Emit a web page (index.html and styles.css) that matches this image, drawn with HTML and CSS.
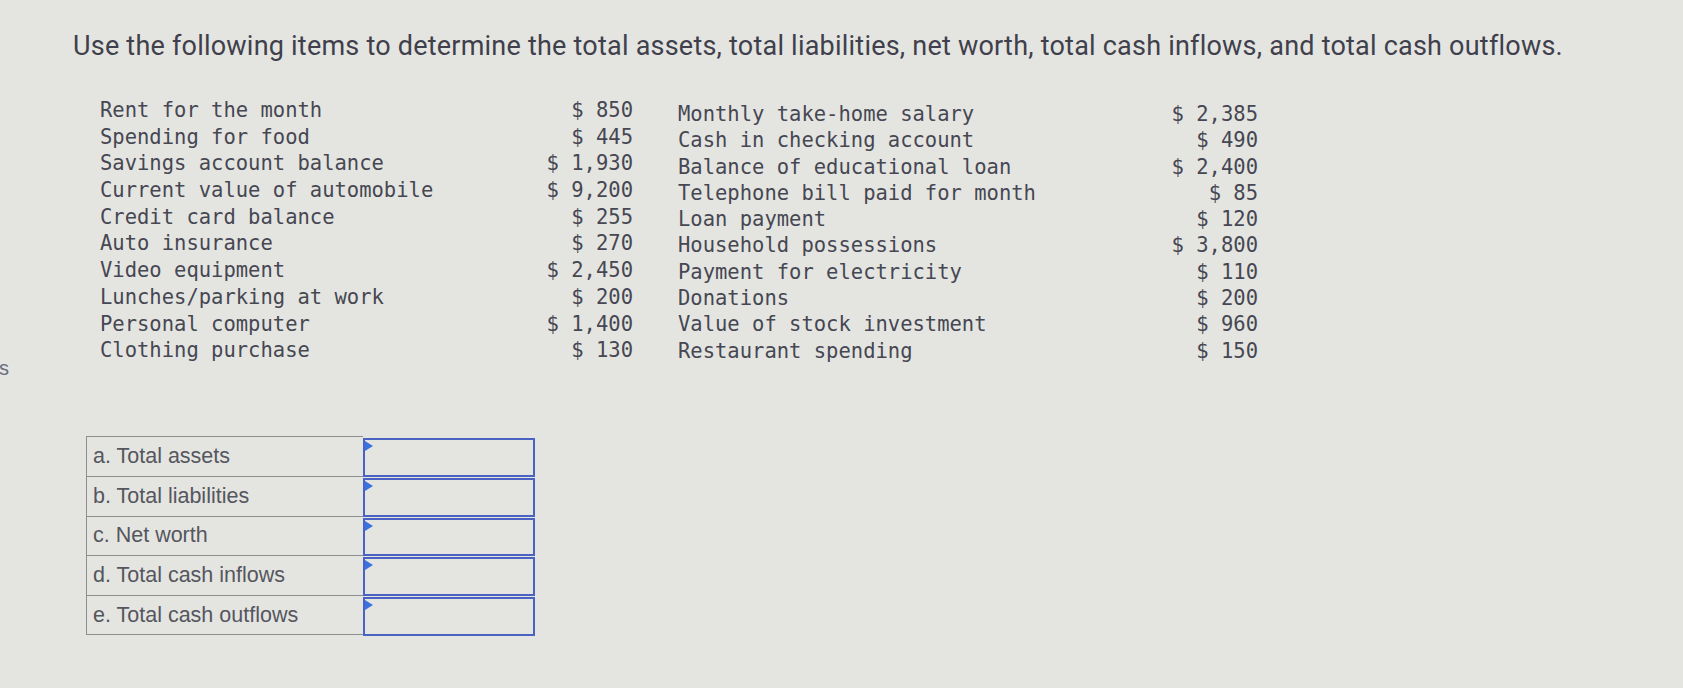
FILE: index.html
```html
<!DOCTYPE html>
<html>
<head>
<meta charset="utf-8">
<link rel="stylesheet" href="styles.css">
</head>
<body>
<div class="page">
  <h1 class="title">Use the following items to determine the total assets, total liabilities, net worth, total cash inflows, and total cash outflows.</h1>

  <div class="data">
    <div class="list list-left">
      <span class="lbl">Rent for the month</span><span class="val">$ 850</span>
      <span class="lbl">Spending for food</span><span class="val">$ 445</span>
      <span class="lbl">Savings account balance</span><span class="val">$ 1,930</span>
      <span class="lbl">Current value of automobile</span><span class="val">$ 9,200</span>
      <span class="lbl">Credit card balance</span><span class="val">$ 255</span>
      <span class="lbl">Auto insurance</span><span class="val">$ 270</span>
      <span class="lbl">Video equipment</span><span class="val">$ 2,450</span>
      <span class="lbl">Lunches/parking at work</span><span class="val">$ 200</span>
      <span class="lbl">Personal computer</span><span class="val">$ 1,400</span>
      <span class="lbl">Clothing purchase</span><span class="val">$ 130</span>
    </div>
    <div class="list list-right">
      <span class="lbl">Monthly take-home salary</span><span class="val">$ 2,385</span>
      <span class="lbl">Cash in checking account</span><span class="val">$ 490</span>
      <span class="lbl">Balance of educational loan</span><span class="val">$ 2,400</span>
      <span class="lbl">Telephone bill paid for month</span><span class="val">$ 85</span>
      <span class="lbl">Loan payment</span><span class="val">$ 120</span>
      <span class="lbl">Household possessions</span><span class="val">$ 3,800</span>
      <span class="lbl">Payment for electricity</span><span class="val">$ 110</span>
      <span class="lbl">Donations</span><span class="val">$ 200</span>
      <span class="lbl">Value of stock investment</span><span class="val">$ 960</span>
      <span class="lbl">Restaurant spending</span><span class="val">$ 150</span>
    </div>
  </div>

  <div class="cut">s</div>

  <div class="answers">
    <div class="alabel">a. Total assets</div><div class="ainput"><span class="mark"></span></div>
    <div class="alabel">b. Total liabilities</div><div class="ainput"><span class="mark"></span></div>
    <div class="alabel">c. Net worth</div><div class="ainput"><span class="mark"></span></div>
    <div class="alabel">d. Total cash inflows</div><div class="ainput"><span class="mark"></span></div>
    <div class="alabel">e. Total cash outflows</div><div class="ainput"><span class="mark"></span></div>
  </div>
</div>
</body>
</html>
```

FILE: styles.css
```css
html, body {
  margin: 0;
  padding: 0;
}
body {
  background: #e4e5e1;
  width: 1683px;
  height: 688px;
  overflow: hidden;
}
.page {
  padding-top: 30px;
}
.title {
  margin: 0 0 0 73px;
  font-family: Roboto, "Liberation Sans", sans-serif;
  font-weight: 400;
  font-size: 27px;
  line-height: 32px;
  color: #3f404c;
  white-space: nowrap;
  letter-spacing: 0.22px;
}
.data {
  display: flex;
  margin-top: 35px;
  margin-left: 100px;
  gap: 45px;
  font-family: "DejaVu Sans Mono", "Liberation Mono", monospace;
  font-size: 20.5px;
  line-height: 26.3px;
  color: #464752;
}
.list {
  display: grid;
  grid-template-columns: 1fr auto;
}
.list-left {
  width: 533px;
}
.list-right {
  width: 580px;
  padding-top: 4px;
}
.lbl, .val {
  white-space: pre;
}
.val {
  text-align: right;
}
.cut {
  margin-top: -8px;
  height: 24px;
  line-height: 24px;
  font-family: "Liberation Sans", sans-serif;
  font-size: 20px;
  color: #6a6d80;
  text-indent: -1px;
}
.answers {
  margin-top: 56px;
  margin-left: 86px;
  display: grid;
  grid-template-columns: 277px 172px;
  grid-auto-rows: 39.8px;
  width: 449px;
  font-family: "Liberation Sans", sans-serif;
  font-size: 21.5px;
  color: #55565e;
}
.alabel {
  border-left: 1px solid #8d8e90;
  border-top: 1px solid #8d8e90;
  padding-left: 6px;
  display: flex;
  align-items: center;
}
.alabel:nth-last-child(2) {
  border-bottom: 1px solid #8d8e90;
}
.ainput {
  position: relative;
  border: 2px solid #4a62c4;
  margin-top: 2px;
  margin-bottom: -1px;
}
.mark {
  position: absolute;
  left: 0;
  top: 1px;
  width: 0;
  height: 0;
  border-top: 5px solid transparent;
  border-bottom: 5px solid transparent;
  border-left: 8px solid #3a72e0;
}
```
